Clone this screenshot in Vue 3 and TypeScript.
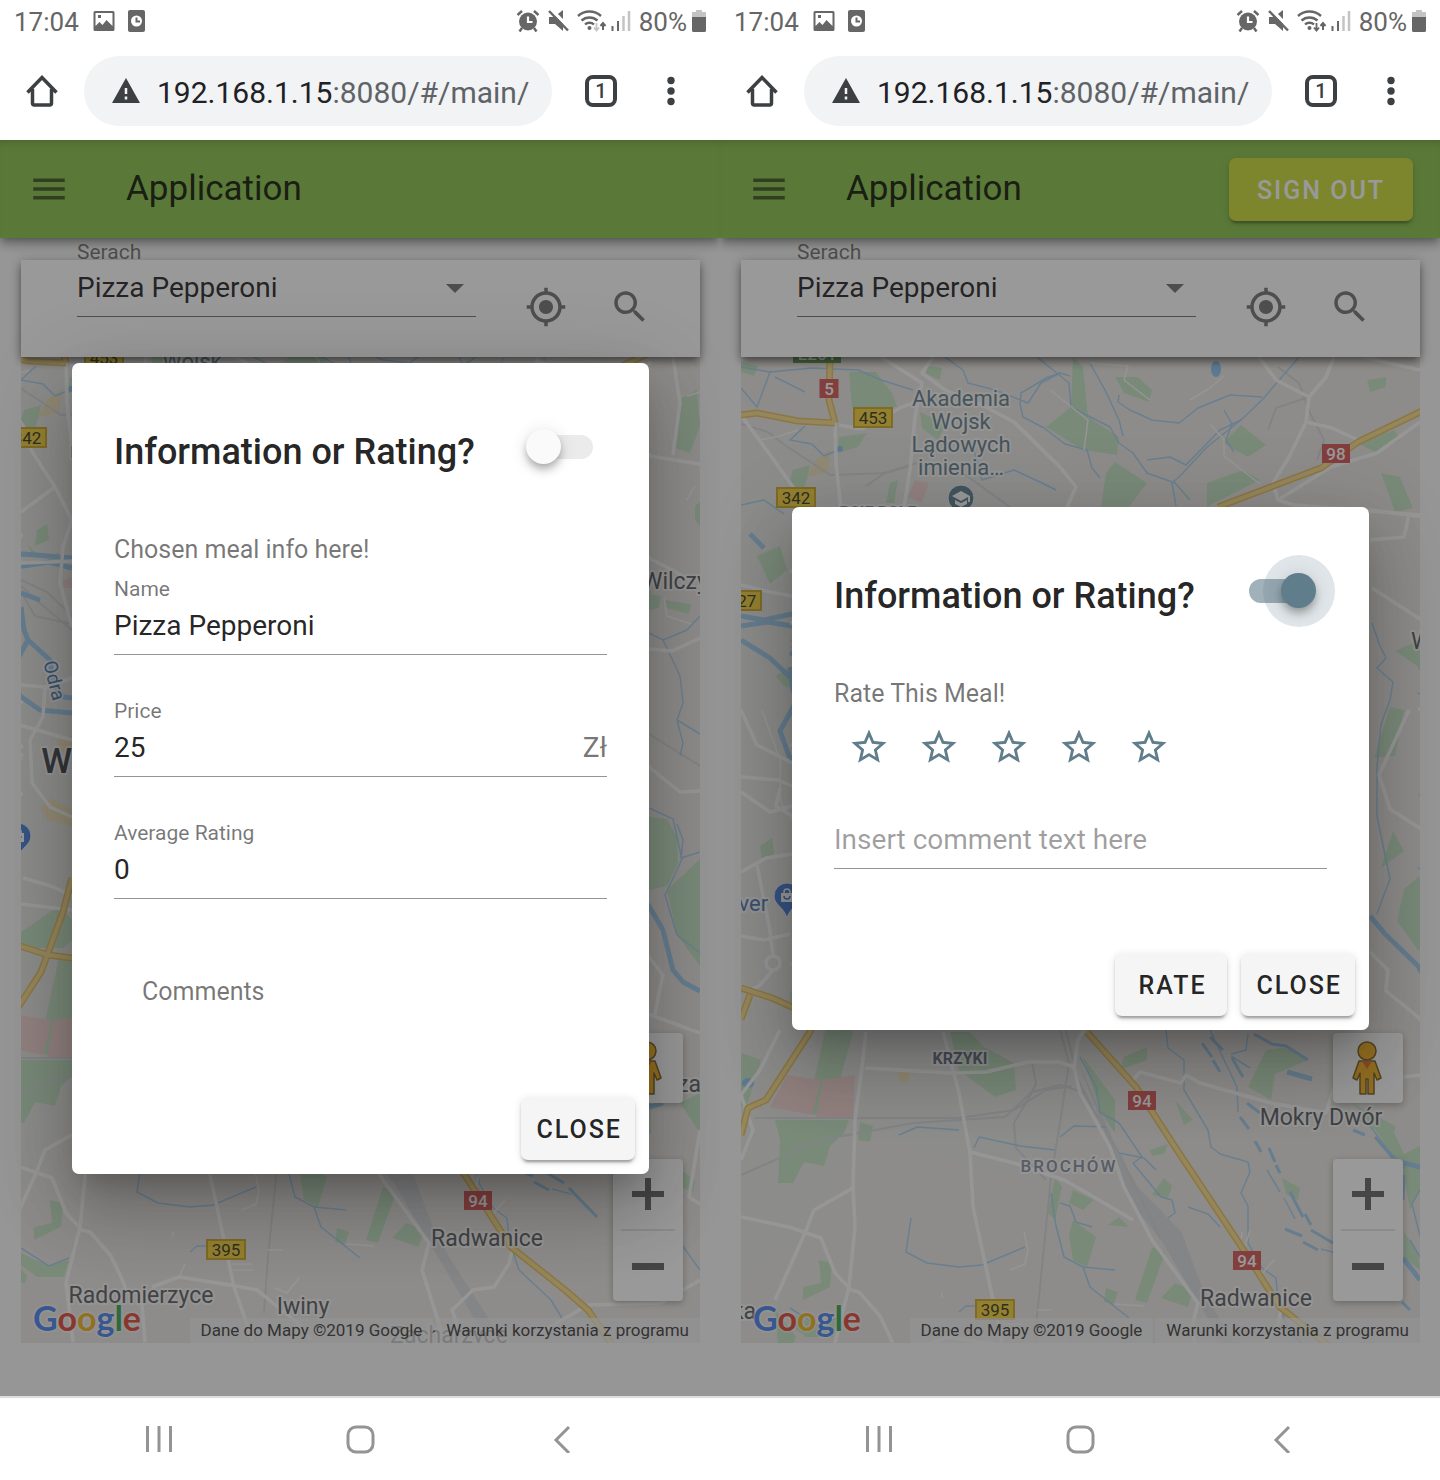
<script setup lang="ts">
import { ref } from 'vue'

interface Field {
  id: string
  label: string
  value: string
  suffix?: string
}

interface Phone {
  id: string
  signOut: boolean
  rating: boolean
  downlink: string
  viewBox: string
}

interface Shield {
  x: number
  y: number
  text: string
  tone: 'yellow' | 'red' | 'green'
}

interface Label {
  x: number
  y: number
  text: string
  tone: string
}

// Both screens show the same map, panned to a different origin.
const phones = ref<Phone[]>([
  { id: 'info', signOut: false, rating: false, downlink: '#c4c4c4', viewBox: '70 417 679 986' },
  { id: 'rate', signOut: true, rating: true, downlink: '#666', viewBox: '21 357 679 986' },
])

const fields: Field[] = [
  { id: 'name', label: 'Name', value: 'Pizza Pepperoni' },
  { id: 'price', label: 'Price', value: '25', suffix: 'Zł' },
  { id: 'average', label: 'Average Rating', value: '0' },
]

const parks: string[] = [
  '129,372 156,372 172,393 177,407 132,407',
  '353,357 363,367 368,417 399,437 397,455 363,450 326,427 351,407',
  '395,377 418,377 432,390 429,402 404,393',
  '395,462 427,483 409,507 381,507 386,473',
  '521,425 546,445 528,457 503,443',
  '487,483 523,470 540,480 500,500 487,507',
  '661,473 680,477 693,508 675,512',
  '638,443 675,430 680,440 657,453',
  '647,380 666,377 666,387 650,392',
  '119,437 147,433 138,447 117,453',
  '170,483 178,480 174,503 166,503',
  '73,470 90,465 87,480 69,483',
  '21,362 38,366 34,376 21,372',
  '208,366 222,368 220,380 206,374',
  '200,412 226,424 218,440 202,428',
  '37,556 60,546 67,570 50,584',
  '70,480 88,472 84,490 70,496',
  '86,590 96,584 98,600 84,606',
  '76,604 88,616 82,616',
  '96,620 108,612 104,624',
  '56,676 68,668 72,690 62,684',
  '40,846 52,838 54,854 42,862',
  '21,1053 41,1060 28,1103 21,1107',
  '70,992 108,966 121,980 121,1000 112,1008 84,1008 70,1002',
  '108,1018 128,1018 133,1032 110,1117 87,1113',
  '55,1120 129,1120 124,1133 110,1146 104,1166 84,1162 73,1183 58,1183 60,1140',
  '140,1122 153,1126 150,1142 138,1140',
  '230,1032 250,1032 264,1047 294,1063 296,1090 275,1097 239,1070',
  '363,1057 395,1100 395,1133 381,1113',
  '404,1057 427,1047 427,1060 400,1070',
  '546,1050 569,1047 588,1060 555,1074 551,1100 528,1087',
  '455,1100 473,1120 464,1125',
  '335,1177 342,1187 335,1220 328,1213',
  '353,1190 374,1200 363,1210 349,1203',
  '353,1220 376,1237 367,1267 353,1260 349,1235',
  '399,1217 409,1227 388,1225',
  '430,1150 448,1144 444,1154 432,1156',
  '432,1195 444,1178 452,1186 448,1198',
  '432,1247 445,1253 427,1303 415,1300',
  '455,1283 473,1290 468,1307 441,1298',
  '386,1288 398,1292 394,1304 384,1302',
  '99,1260 112,1263 110,1287 83,1300 83,1287 101,1283',
  '70,1313 98,1326 118,1320 113,1337 86,1337 70,1325',
  '55,1310 76,1336 74,1343 58,1343',
  '562,1178 580,1188 578,1200 566,1194',
  '634,1104 660,1118 676,1126 674,1132 684,1154 700,1146 700,1190 690,1210 684,1176 660,1136',
  '684,1232 698,1252 700,1270 684,1258',
  '729,459 746,450 749,486 739,513 724,508',
  '744,566 749,562 749,586 744,580',
  '698,654 710,656 708,668 698,670',
  '714,660 740,664 738,674 716,668',
  '654,758 670,707 684,710 675,756',
  '661,868 673,831 684,851',
  '675,651 700,640 700,668',
  '677,921 684,889 698,877 716,879 726,897 727,923 716,946 698,950',
  '716,950 749,919 749,1026 726,995',
  '749,1153 729,1163 749,1193',
  '730,1230 744,1240 742,1252 728,1246',
]

const pinkAreas: string[] = [
  '67,1075 101,1080 92,1115 50,1107',
  '103,1080 135,1075 133,1117 96,1117',
  '195,480 209,483 202,503 188,497',
  '112,640 121,638 121,648 113,648',
]

const sandAreas: string[] = [
  '96,460 110,450 108,473 87,477',
  '177,1072 190,1072 188,1082 180,1082',
  '90,868 100,858 121,870 121,886 96,880',
  '106,800 121,796 121,810 110,812',
]

const streams: string[] = [
  '21,367 50,372 92,368 138,370 161,380 193,390',
  '50,372 37,407 21,388',
  '55,377 85,392',
  '85,426 70,440 92,444 104,456 118,450',
  '225,357 243,370 248,383 275,390 308,403 321,383 340,373 350,376',
  '317,357 349,383 351,407 390,427 399,443 413,453 427,473 455,483 470,500',
  '340,373 328,377 301,393 300,404 303,417 324,428 345,444 367,450 372,468 380,478',
  '399,395 398,402 410,410 432,420 459,423 478,408 510,395 542,397',
  '579,357 542,400 521,420 487,447 460,476 452,483 456,506',
  '427,460 450,457 466,465 500,430 521,420',
  '370,363 386,392 399,420 403,436',
  '504,410 512,424 506,440 514,452',
  '254,450 262,480 294,470 320,482 336,490',
  '21,505 44,500 64,514',
  '652,623 660,646 666,658 657,668 673,682 670,700 661,724 657,767 657,816 670,879 662,900 657,914',
  '179,1135 197,1127 239,1130',
  '254,1148 259,1137 300,1146 335,1150',
  '191,1218 186,1252 207,1263 239,1267 262,1265 305,1247',
  '340,1137 354,1126 386,1127',
  '331,1193 336,1226 344,1257 363,1267 370,1287 394,1306 409,1318',
  '340,1203 350,1206 356,1222 372,1227',
  '363,1267 395,1270',
  '239,1312 246,1306 262,1306',
  '360,1057 376,1087 380,1112 399,1123 422,1157 413,1163 441,1197 452,1200 455,1213 448,1218',
  '399,1153 424,1158 436,1170',
  '446,1030 448,1048 464,1060 464,1090 488,1130 491,1147 500,1154 528,1162 530,1172 521,1193 528,1206 528,1243 542,1268 556,1278 558,1300 568,1330 600,1360 612,1380',
  '468,1207 488,1214 500,1227',
  '490,1030 506,1064 517,1087 518,1112',
  '511,1054 526,1050 528,1034',
  '511,1056 530,1068',
  '632,1116 650,1126 668,1150 684,1168',
  '700,1190 692,1204 700,1236',
  '70,1308 98,1326 118,1318',
  '698,693 712,700 729,736 732,763 726,780 732,803 729,816',
  '726,780 749,794',
  '712,700 736,690 749,676',
  '698,868 722,879 731,919 714,955 726,995 749,1013',
  '726,884 732,900 730,918 749,912',
  '690,1240 720,1290 749,1330',
]

const rivers: string[] = [
  '21,626 48,622 72,626 98,622 121,628',
  '21,616 44,620 72,614 121,618',
  '21,640 50,658 72,679',
  '70,653 89,660',
  '70,667 73,690 77,700 99,720 102,743 112,757 121,758',
  '77,700 60,731 69,756 89,770 121,773',
  '650,916 666,935 698,966 712,990 722,1030 732,1042 749,1051',
  '680,1162 700,1167 712,1163',
  '683,1258 700,1280',
  '567,1072 592,1079',
  '30,534 44,548',
]

const ditches: string[] = [
  '482,1043 492,1057',
  '493,1060 500,1072',
  '490,1037 503,1050',
  '512,1058 523,1077',
  '534,1034 552,1044 566,1046 588,1060',
  '527,1103 540,1113',
  '520,1117 529,1129',
  '535,1141 541,1152',
  '549,1148 555,1162',
  '556,1165 560,1173',
  '570,1192 583,1217',
  '585,1214 591,1225',
  '565,1229 582,1236',
  '583,1242 598,1250',
  '591,1230 613,1243',
  '618,1248 646,1277',
  '633,1130 645,1135',
  '655,1137 673,1158',
  '684,1175 683,1200',
  '682,1302 690,1310',
]

const thinDitches: string[] = [
  '547,1170 560,1192',
  '564,1198 575,1219',
  '601,1249 620,1254',
]

const railways: string[] = [
  '21,424 48,432 66,446 83,457 110,475 165,473 197,463',
  '146,486 165,473 190,466',
  '243,473 294,510',
  '558,367 579,383 590,413 604,440 597,460',
  '589,397 556,408 548,430',
  '21,1175 101,1140 193,1123 285,1117 312,1092 340,1085 363,1092 399,1153 441,1240',
  '34,1118 239,1118 294,1110 326,1090 352,1086',
  '312,1062 316,1084 310,1096 294,1123 296,1148 326,1180',
  '340,1030 349,1063 340,1123 331,1177 317,1317 313,1373',
  '346,1030 358,1080 372,1106',
  '70,640 96,652 121,676',
  '70,646 90,664 121,690',
  '70,652 84,676 121,684',
  '698,794 749,826',
]

const minorRoads: string[] = [
  '370,363 408,366 404,380 430,400',
  '330,390 368,420 364,450',
  '470,400 490,388 504,376',
  '490,424 504,440 504,456 540,484',
  '40,440 60,436 78,430',
  '291,1270 305,1264 308,1250 304,1232',
  '222,1292 222,1298',
  '317,1310 332,1310',
  '281,1324 302,1324',
  '281,1330 302,1330',
  '228,1337 234,1324',
  '395,1304 424,1306',
  '540,1276 554,1260',
  '524,1250 530,1230',
  '520,1246 522,1232',
  '324,1348 336,1353 348,1338',
  '736,456 749,452',
  '736,560 744,546',
  '713,658 716,676 740,684',
  '42,710 60,760 60,800 72,820',
]

const roads: string[] = [
  '119,425 142,429',
  '115,423 116,463 120,500 121,520',
  '23,418 48,452 73,487 80,510 104,547 121,580 112,607 109,643 121,687',
  '70,572 104,547',
  '161,357 202,383 195,417 190,470 184,507',
  '213,357 202,373 225,390 262,405 294,422 340,467 356,487 347,507',
  '142,429 180,408 200,400',
  '539,357 556,380 589,397 606,377 614,357',
  '589,397 586,422 569,457 553,483 558,500 574,505 700,515',
  '586,422 612,428 638,440',
  '700,422 657,453 611,467 558,500',
  '643,357 700,370',
  '689,515 684,537 650,540',
  '21,585 50,592 72,596',
  '70,623 100,622 121,621',
  '70,745 96,747 121,738',
  '94,747 92,777 79,800 81,843 99,867 121,877',
  '21,710 37,745 72,763',
  '21,777 58,780 72,786 121,800',
  '60,788 56,806 72,816',
  '21,792 50,812 72,806',
  '21,872 46,858 72,854',
  '37,865 50,931 53,956',
  '53,970 40,985 30,991',
  '21,936 44,940 70,934',
  '72,938 100,946 121,956',
  '70,964 121,970',
  '60,1030 40,1070 21,1095 33,1130 21,1160',
  '146,1032 142,1067 135,1120 133,1187 135,1227 129,1287 115,1343 122,1402',
  '133,1188 94,1210 85,1233 55,1300',
  '21,1217 69,1227 101,1238 115,1273 131,1290 139,1292 160,1316 170,1337 176,1352 190,1352 194,1402',
  '201,1347 228,1337 279,1345 306,1350 343,1380 360,1400',
  '223,1032 239,1093 250,1153 253,1207 273,1300 283,1347 302,1402',
  '145,1068 230,1073 266,1072 308,1062 340,1062 354,1067 360,1093 390,1147 404,1187 432,1240 478,1303 471,1330 490,1390',
  '354,1067 358,1040 364,1030',
  '250,1152 294,1163 344,1180 367,1193 413,1220',
  '411,1082 420,1072 461,1083 466,1075 480,1083 551,1103 606,1113 613,1090 640,1082 700,1075 749,1093',
  '561,1310 558,1324 543,1347 522,1350 501,1370 508,1390',
  '749,1340 710,1363 637,1365 590,1392',
  '722,417 729,463 722,515',
  '650,510 698,516 749,524',
  '652,588 700,619 740,640',
  '698,709 721,711 749,698',
  '689,710 659,775 670,809 698,827 729,852 749,851',
  '650,952 668,970 666,991 698,1017 712,1035 708,1053 704,1075',
  '749,1190 738,1257 749,1264',
  '310,1000 312,1020',
]

const highways: string[] = [
  '21,415 37,413 78,421 115,423',
  '110,357 109,400 115,423',
  '498,507 556,485 601,468 638,442 700,412 749,390',
  '21,988 52,998 72,1007 97,1015 121,1018',
  '30,995 21,1019',
  '121,938 112,972 97,1013 90,1032 46,1100 28,1108 21,1135',
  '367,1032 416,1087 459,1153 519,1243 560,1307 614,1350 637,1370 660,1403',
]

const shields: Shield[] = [
  { x: 97, y: 354, text: 'E261', tone: 'green' },
  { x: 109, y: 389, text: '5', tone: 'red' },
  { x: 153, y: 418, text: '453', tone: 'yellow' },
  { x: 76, y: 498, text: '342', tone: 'yellow' },
  { x: 616, y: 454, text: '98', tone: 'red' },
  { x: 22, y: 601, text: '327', tone: 'yellow' },
  { x: 422, y: 1101, text: '94', tone: 'red' },
  { x: 527, y: 1261, text: '94', tone: 'red' },
  { x: 275, y: 1310, text: '395', tone: 'yellow' },
]

const labels: Label[] = [
  { x: 241, y: 406, text: 'Akademia', tone: 'place school' },
  { x: 241, y: 429, text: 'Wojsk', tone: 'place school' },
  { x: 241, y: 452, text: 'Lądowych', tone: 'place school' },
  { x: 241, y: 475, text: 'imienia…', tone: 'place school' },
  { x: 240, y: 1064, text: 'KRZYKI', tone: 'district' },
  { x: 349, y: 1172, text: 'BROCHÓW', tone: 'district wide' },
  { x: 158, y: 518, text: 'PSIE POLE', tone: 'district muted' },
  { x: 601, y: 1125, text: 'Mokry Dwór', tone: 'town' },
  { x: 536, y: 1306, text: 'Radwanice', tone: 'town' },
  { x: 190, y: 1363, text: 'Radomierzyce', tone: 'town' },
  { x: 352, y: 1374, text: 'Iwiny', tone: 'town' },
  { x: 498, y: 1403, text: 'Zacharzyce', tone: 'town' },
  { x: 736, y: 649, text: 'Wilczyce', tone: 'town' },
  { x: 738, y: 1152, text: 'za', tone: 'town' },
  { x: 24, y: 1319, text: 'ka', tone: 'town' },
  { x: 158, y: 833, text: 'Wrocław', tone: 'city' },
  { x: 20, y: 911, text: 'Dover', tone: 'place shop' },
]

function shieldWidth(s: Shield): number {
  return s.text.length * 10 + (s.text.length > 1 ? 8 : 9)
}
</script>

<template>
  <main class="stage">
    <section v-for="p in phones" :key="p.id" class="phone">
      <header class="status">
        <span class="status-text">17:04</span>
        <svg class="picture" width="22" height="22" viewBox="0 0 22 22">
          <path fill="#666" fill-rule="evenodd" d="M2 1h18a1.500 1.500 0 0 1 1.500 1.500v17A1.500 1.500 0 0 1 20 21H2a1.500 1.500 0 0 1-1.500-1.500v-17A1.500 1.500 0 0 1 2 1zM2.500 3v13l4-4 3 3 4-5 6 6V3zM5 5h3v3H5z" />
        </svg>
        <svg class="note" width="18" height="22" viewBox="0 0 18 22">
          <rect x="0" y="0" width="17" height="22" rx="2" fill="#666" />
          <circle cx="8.500" cy="11" r="5.500" fill="#fff" />
          <path d="M8.500 7.500V11.500H12" fill="none" stroke="#666" stroke-width="2" />
        </svg>
        <span class="spacer"></span>
        <svg width="24" height="24" viewBox="0 0 24 24">
          <circle cx="12" cy="12.500" r="9" fill="#666" />
          <path d="M12 7.500v5.500h4.500" fill="none" stroke="#fff" stroke-width="2.200" />
          <path d="M1.500 6 6 2M22.500 6 18 2M6 19l-2.500 3.500M18 19l2.500 3.500" stroke="#666" stroke-width="2.500" />
        </svg>
        <svg class="mute" width="24" height="24" viewBox="0 0 24 24">
          <path d="M2 8h5l9-7v21l-8-7H2z" fill="#666" />
          <path d="M3.500 0 24 20.500" stroke="#fff" stroke-width="3.500" />
          <path d="M2 2 21 21.500" stroke="#666" stroke-width="2.500" />
        </svg>
        <svg class="wifi" width="30" height="24" viewBox="0 0 30 24">
          <g fill="none" stroke="#666" stroke-width="2.400">
            <path d="M1 7a17 17 0 0 1 23 0" />
            <path d="M4.500 11.500a12 12 0 0 1 16 0" />
            <path d="M8 15.500a6.500 6.500 0 0 1 9 0" />
          </g>
          <circle cx="12.500" cy="19" r="2" fill="#666" />
          <path d="M19.500 14v7M17 18.500 19.500 21.500l2.500-3" fill="none" :stroke="p.downlink" stroke-width="1.800" />
          <path d="M26 21v-7M23.500 17 26 14l2.500 3" fill="none" stroke="#666" stroke-width="2" />
        </svg>
        <svg class="signal" width="20" height="22" viewBox="0 0 20 22">
          <path d="M1.500 16v5M7 11v10" stroke="#666" stroke-width="2" />
          <path d="M12.500 6v15M18 1v20" stroke="#c4c4c4" stroke-width="2.500" />
        </svg>
        <span class="status-text">80%</span>
        <svg class="battery" width="14" height="22" viewBox="0 0 14 22">
          <path d="M4 0h6v2h4v6H0V2h4z" fill="#c4c4c4" />
          <path d="M0 7h14v13.500a1.500 1.500 0 0 1-1.500 1.500h-11A1.500 1.500 0 0 1 0 20.500z" fill="#666" />
        </svg>
      </header>

      <nav class="chrome" aria-label="Browser">
        <button class="chrome-btn home" aria-label="Home">
          <svg width="34" height="34" viewBox="0 0 34 34">
            <path d="M2.500 18.500 17 3.500l14.500 15M7.500 15v14.500a1.500 1.500 0 0 0 1.500 1.500h16a1.500 1.500 0 0 0 1.500-1.500V15" fill="none" stroke="#3c4043" stroke-width="3.500" />
          </svg>
        </button>
        <button class="omnibox" aria-label="Edit address">
          <svg width="28" height="28" viewBox="0 0 28 28">
            <path d="M14 1 28 26H0z" fill="#3c4043" />
            <path d="M14 11v6M14 19.500v3" stroke="#f1f3f4" stroke-width="2.500" />
          </svg>
          <span class="url">192.168.1.15<span class="path">:8080/#/main/</span></span>
        </button>
        <button class="chrome-btn tabs" aria-label="Open tabs"><span class="tab-count">1</span></button>
        <button class="chrome-btn kebab" aria-label="More">
          <svg width="8" height="30" viewBox="0 0 8 30">
            <g fill="#3c4043">
              <circle cx="4" cy="4.500" r="3.700" />
              <circle cx="4" cy="15" r="3.700" />
              <circle cx="4" cy="25.500" r="3.700" />
            </g>
          </svg>
        </button>
      </nav>

      <div class="viewport">
        <header class="toolbar">
          <button class="menu" aria-label="Menu">
            <svg width="42" height="42" viewBox="0 0 24 24"><path d="M3 18h18v-2H3v2zm0-5h18v-2H3v2zm0-7v2h18V6H3z" fill="rgba(0,0,0,.54)" /></svg>
          </button>
          <h1>Application</h1>
          <span class="spacer"></span>
          <button v-if="p.signOut" class="btn sign-out">SIGN OUT</button>
        </header>

        <div class="content">
          <div class="search-card">
            <div class="search-field">
              <label :for="'meal-' + p.id">Serach</label>
              <div class="select-wrap">
                <select :id="'meal-' + p.id">
                  <option>Pizza Pepperoni</option>
                </select>
                <svg class="caret" width="18" height="9" viewBox="0 0 18 9"><path d="M0 0h18L9 9z" fill="rgba(0,0,0,.54)" /></svg>
              </div>
            </div>
            <button class="icon-btn" aria-label="Locate me">
              <svg width="42" height="42" viewBox="0 0 24 24"><path fill="rgba(0,0,0,.54)" d="M12 8c-2.210 0-4 1.790-4 4s1.790 4 4 4 4-1.790 4-4-1.790-4-4-4zm8.940 3c-.46-4.170-3.770-7.480-7.940-7.940V1h-2v2.060C6.830 3.520 3.520 6.830 3.060 11H1v2h2.060c.46 4.170 3.770 7.480 7.940 7.940V23h2v-2.060c4.170-.46 7.480-3.770 7.940-7.940H23v-2h-2.060zM12 19c-3.870 0-7-3.130-7-7s3.130-7 7-7 7 3.130 7 7-3.130 7-7 7z" /></svg>
            </button>
            <button class="icon-btn" aria-label="Search">
              <svg width="42" height="42" viewBox="0 0 24 24"><path fill="rgba(0,0,0,.54)" d="M15.500 14h-.79l-.28-.27C15.410 12.590 16 11.110 16 9.500 16 5.910 13.090 3 9.500 3S3 5.910 3 9.500 5.910 16 9.500 16c1.610 0 3.090-.59 4.230-1.570l.27.28v.79l5 4.990L20.490 19l-4.990-5zm-6 0C7.010 14 5 11.990 5 9.500S7.010 5 9.500 5 14 7.010 14 9.500 11.990 14 9.500 14z" /></svg>
            </button>
          </div>

          <div class="map">
            <svg class="map-canvas" :viewBox="p.viewBox" preserveAspectRatio="xMidYMin slice">
              <rect x="0" y="300" width="800" height="1200" fill="#ebe8e3" />
              <polygon class="urban" points="0,440 130,420 330,470 400,600 420,900 380,1100 300,1180 140,1130 90,1230 0,1300" />
              <polygon v-for="(d, i) in parks" :key="'g' + i" class="park" :points="d" />
              <polygon v-for="(d, i) in pinkAreas" :key="'p' + i" class="pink" :points="d" />
              <polygon v-for="(d, i) in sandAreas" :key="'s' + i" class="sand" :points="d" />
              <polygon class="yard" points="358,1062 372,1092 399,1153 418,1187 446,1216 462,1232 468,1250 482,1287 500,1320 545,1390 530,1390 487,1317 441,1240 409,1200 384,1130" />
              <polyline v-for="(d, i) in railways" :key="'r' + i" class="rail" :points="d" />
              <polyline v-for="(d, i) in streams" :key="'w' + i" class="stream" :points="d" />
              <polyline v-for="(d, i) in rivers" :key="'v' + i" class="river" :points="d" />
              <polyline v-for="(d, i) in ditches" :key="'d' + i" class="ditch" :points="d" />
              <polyline v-for="(d, i) in thinDitches" :key="'t' + i" class="stream" :points="d" />
              <ellipse cx="496" cy="369" rx="5" ry="8" class="lake" />
              <ellipse cx="120" cy="449" rx="3" ry="3" class="lake" />
              <ellipse cx="28" cy="1083" rx="6" ry="5" class="lake" />
              <polyline v-for="(d, i) in minorRoads" :key="'m' + i" class="minor" :points="d" />
              <polyline v-for="(d, i) in roads" :key="'o' + i" class="road" :points="d" />
              <circle cx="53" cy="963" r="7" class="road" />
              <polyline v-for="(d, i) in highways" :key="'hc' + i" class="highway-case" :points="d" />
              <polyline v-for="(d, i) in highways" :key="'h' + i" class="highway" :points="d" />

              <g v-for="(s, i) in shields" :key="'sh' + i" :class="['shield', s.tone]">
                <rect :x="s.x - shieldWidth(s) / 2" :y="s.y - 10" :width="shieldWidth(s)" height="19" />
                <text :x="s.x" :y="s.y + 6">{{ s.text }}</text>
              </g>

              <text v-for="(l, i) in labels" :key="'l' + i" :class="['label', l.tone]" :x="l.x" :y="l.y">{{ l.text }}</text>
              <text class="label water-name" transform="translate(97 742) rotate(76)">Odra</text>

              <circle cx="241" cy="498" r="13" fill="#5f8295" stroke="#f4f4f4" stroke-width="1" />
              <path d="M241 491l-9 5 9 5 7-4v5h2v-6zM235 500v4l6 3 6-3v-4l-6 3z" fill="#fff" />
              <path d="M67 883a13 13 0 0 1 13 13c0 9-10 11-13 22-3-11-13-13-13-22a13 13 0 0 1 13-13z" fill="#4a80d8" stroke="#e8f0fb" stroke-width="1" />
              <path d="M61 893h12v9H61z" fill="#fff" />
              <path d="M64 893v-1a3 3 0 0 1 6 0v1" fill="none" stroke="#fff" stroke-width="1.500" />
              <path d="M64 896a3 3 0 0 0 6 0" fill="none" stroke="#4a80d8" stroke-width="1.500" />
            </svg>

            <div class="map-controls">
              <button class="pegman" aria-label="Street View">
                <svg width="32" height="54" viewBox="0 0 32 54">
                  <g fill="#f5b220" stroke="#7d6428" stroke-width="1.500" stroke-linejoin="round">
                    <path d="M8 20h16l6 17-4 2-3-7v21h-6V38h-2v15H9V32l-3 7-4-2z" />
                    <circle cx="16" cy="10" r="9" />
                  </g>
                  <path d="M11 20h10l-5 8z" fill="#e0702a" />
                </svg>
              </button>
              <div class="zoom">
                <button aria-label="Zoom in">
                  <svg width="32" height="32" viewBox="0 0 32 32"><path d="M13 0h6v13h13v6H19v13h-6V19H0v-6h13z" fill="#666" /></svg>
                </button>
                <span class="zoom-rule"></span>
                <button aria-label="Zoom out">
                  <svg width="32" height="32" viewBox="0 0 32 32"><path d="M0 13h32v7H0z" fill="#666" /></svg>
                </button>
              </div>
            </div>

            <a class="google" href="#" aria-label="Google"><span class="blue">G</span><span class="crimson">o</span><span class="gold">o</span><span class="blue">g</span><span class="leaf">l</span><span class="crimson">e</span></a>
            <div class="credits">
              <span>Dane do Mapy ©2019 Google</span>
              <a href="#">Warunki korzystania z programu</a>
            </div>
          </div>
        </div>

        <div class="overlay">
          <section class="dialog" role="dialog" :aria-labelledby="'title-' + p.id">
            <div class="title-row">
              <h2 :id="'title-' + p.id">Information or Rating?</h2>
              <input class="switch" type="checkbox" :checked="p.rating" :aria-labelledby="'title-' + p.id" />
            </div>

            <template v-if="!p.rating">
              <p class="subtitle">Chosen meal info here!</p>
              <div class="fields">
                <div v-for="f in fields" :key="f.id" class="field">
                  <label :for="f.id">{{ f.label }}</label>
                  <div class="field-line">
                    <input :id="f.id" type="text" :value="f.value" readonly />
                    <span v-if="f.suffix" class="suffix">{{ f.suffix }}</span>
                  </div>
                </div>
              </div>
              <p class="subtitle comments">Comments</p>
              <div class="actions">
                <button class="btn">CLOSE</button>
              </div>
            </template>

            <template v-else>
              <p class="subtitle">Rate This Meal!</p>
              <div class="stars">
                <button v-for="n in 5" :key="n" :aria-label="'Rate ' + n">
                  <svg width="42" height="42" viewBox="0 0 24 24"><path fill="#607d8b" d="M12 15.390l-3.760 2.270.99-4.280-3.320-2.880 4.380-.37L12 6.090l1.710 4.040 4.380.37-3.320 2.880.99 4.280M22 9.240l-7.190-.61L12 2 9.190 8.630 2 9.240l5.450 4.730L5.820 21 12 17.270 18.180 21l-1.640-7.030L22 9.240z" /></svg>
                </button>
              </div>
              <div class="field-line comment-line">
                <input type="text" placeholder="Insert comment text here" aria-label="Insert comment text here" />
              </div>
              <div class="actions">
                <button class="btn">RATE</button>
                <button class="btn">CLOSE</button>
              </div>
            </template>
          </section>
        </div>
      </div>

      <nav class="system-nav" aria-label="System">
        <button aria-label="Recent apps">
          <svg width="28" height="28" viewBox="0 0 28 28"><path d="M3.500 1v26M15 1v26M26.500 1v26" stroke="#949494" stroke-width="3" /></svg>
        </button>
        <button aria-label="Home screen">
          <svg width="30" height="30" viewBox="0 0 30 30"><rect x="3" y="3" width="25" height="25" rx="8" fill="none" stroke="#949494" stroke-width="3" /></svg>
        </button>
        <button aria-label="Back">
          <svg width="28" height="28" viewBox="0 0 28 28"><path d="M21 2 8 15l13 13" fill="none" stroke="#949494" stroke-width="3" /></svg>
        </button>
      </nav>
    </section>
  </main>
</template>

<style>
body {
  margin: 0;
  background: #fff;
}
</style>

<style scoped>
.stage {
  display: flex;
  min-height: 100vh;
  font-family: Roboto, "Liberation Sans", sans-serif;
  color: rgba(0, 0, 0, 0.87);
}

.phone {
  flex: 1;
  min-width: 0;
  display: flex;
  flex-direction: column;
}

button,
input,
select {
  font: inherit;
  color: inherit;
  margin: 0;
  padding: 0;
  border: 0;
  background: none;
  outline: 0;
}

button {
  display: flex;
  align-items: center;
  justify-content: center;
}

svg {
  display: block;
  flex: none;
}

h1,
h2,
p {
  margin: 0;
}

.spacer {
  flex: 1;
}

/* Android status bar */
.status {
  display: flex;
  align-items: center;
  height: 42px;
  padding: 0 14px;
}

.status-text {
  font-size: 26px;
  line-height: 42px;
  padding-top: 2px;
  color: #666;
}

.picture {
  margin-left: 14px;
}

.note {
  margin-left: 13px;
}

.mute {
  margin-left: 7px;
}

.wifi {
  margin-left: 6px;
}

.signal {
  margin: 0 8px 0 4px;
}

.battery {
  margin-left: 5px;
}

/* Browser bar */
.chrome {
  display: flex;
  align-items: center;
  height: 98px;
  padding-right: 28px;
}

.chrome-btn {
  height: 70px;
}

.home {
  width: 84px;
}

.tabs {
  width: 98px;
}

.kebab {
  width: 42px;
}

.tab-count {
  box-sizing: border-box;
  width: 32px;
  height: 32px;
  border: 4px solid #3c4043;
  border-radius: 8px;
  font-size: 20px;
  line-height: 25px;
  font-weight: 500;
  color: #3c4043;
}

.omnibox {
  flex: 1;
  min-width: 0;
  height: 70px;
  padding: 0 17px 0 28px;
  border-radius: 35px;
  background: #f1f3f4;
  justify-content: flex-start;
}

.url {
  flex: 1;
  min-width: 0;
  margin-left: 17px;
  overflow: hidden;
  white-space: nowrap;
  text-align: left;
  font-size: 30px;
  line-height: 40px;
  padding-top: 3px;
  color: #202124;
}

.path {
  color: #5f6368;
}

/* Application */
.viewport {
  position: relative;
  flex: 1;
  display: flex;
  flex-direction: column;
  overflow: hidden;
  background: #fafafa;
}

.toolbar {
  position: relative;
  z-index: 2;
  display: flex;
  align-items: center;
  height: 98px;
  padding: 0 27px 0 28px;
  background: #8bc34a;
  box-shadow: 0 3px 7px -2px rgba(0, 0, 0, 0.3), 0 7px 9px rgba(0, 0, 0, 0.2), 0 2px 18px rgba(0, 0, 0, 0.18), inset 0 8px 8px -6px rgba(0, 0, 0, 0.2);
}

.toolbar h1 {
  margin-left: 56px;
  font-size: 35px;
  line-height: 48px;
  font-weight: 400;
}

.btn {
  box-sizing: border-box;
  min-width: 112px;
  height: 63px;
  padding: 2px 13px 0 15px;
  border-radius: 7px;
  background: #f5f5f5;
  font-size: 25px;
  font-weight: 500;
  letter-spacing: 2px;
  box-shadow: 0 5px 2px -3px rgba(0, 0, 0, 0.2), 0 3px 3px rgba(0, 0, 0, 0.14), 0 2px 8px rgba(0, 0, 0, 0.12);
}

.sign-out {
  padding: 2px 28px 0;
  background: #cddc39;
  color: #fff;
}

.content {
  flex: 1;
  display: flex;
  flex-direction: column;
  padding: 22px 20px 53px 21px;
}

.search-card {
  position: relative;
  z-index: 1;
  display: flex;
  align-items: center;
  height: 94px;
  padding: 0 28px 3px 56px;
  background: #fff;
  box-shadow: 0 5px 8px -2px rgba(0, 0, 0, 0.35), 0 4px 8px rgba(0, 0, 0, 0.25), 0 2px 14px rgba(0, 0, 0, 0.2);
}

.search-field {
  flex: 1;
  align-self: flex-start;
  margin: -20px 28px 0 0;
  display: flex;
  flex-direction: column;
}

.search-field label {
  font-size: 21px;
  line-height: 24px;
  color: rgba(0, 0, 0, 0.54);
}

.select-wrap {
  display: flex;
  align-items: center;
  height: 48px;
  padding-bottom: 4px;
  border-bottom: 1px solid rgba(0, 0, 0, 0.54);
}

.select-wrap select {
  flex: 1;
  appearance: none;
  font-size: 28px;
  line-height: 34px;
}

.caret {
  margin-right: 12px;
}

.icon-btn {
  width: 84px;
  height: 84px;
}

/* Map */
.map {
  position: relative;
  z-index: 0;
  flex: 1;
  min-height: 900px;
  overflow: hidden;
}

.map-canvas {
  position: absolute;
  inset: 0;
  width: 100%;
  height: 100%;
}

.urban {
  fill: #e8e7e6;
}

.park {
  fill: #c4e3c4;
}

.pink {
  fill: #f0d3cf;
}

.sand {
  fill: #efe1ba;
}

.yard {
  fill: #d9dade;
}

.lake {
  fill: #8fc5f2;
}

.rail,
.stream,
.river,
.ditch,
.minor,
.road,
.highway,
.highway-case {
  fill: none;
  stroke-linejoin: round;
}

.rail {
  stroke: #d4d6d9;
  stroke-width: 2;
}

.stream {
  stroke: #a6cfee;
  stroke-width: 1.5;
}

.river {
  stroke: #a0cbec;
  stroke-width: 5;
}

.ditch {
  stroke: #a0cbec;
  stroke-width: 3;
}

.minor {
  stroke: #f8f7f5;
  stroke-width: 1.5;
}

.road {
  stroke: #fbfaf9;
  stroke-width: 3.5;
}

.highway-case {
  stroke: #e7bf62;
  stroke-width: 7;
}

.highway {
  stroke: #f7de8e;
  stroke-width: 4;
}

.shield text {
  font-size: 17px;
  font-weight: 500;
  text-anchor: middle;
}

.yellow rect {
  fill: #f5d33c;
  stroke: #cfa92c;
  stroke-width: 2;
}

.yellow text {
  fill: #3c3a26;
  font-weight: 400;
}

.red rect {
  fill: #d65757;
}

.red text,
.green text {
  fill: #fff;
}

.green rect {
  fill: #5b9a4a;
}

.label {
  paint-order: stroke;
  stroke: rgba(255, 255, 255, 0.6);
  stroke-width: 4px;
  stroke-linejoin: round;
  text-anchor: middle;
}

.town {
  font-size: 23px;
  fill: #5b5f66;
}

.city {
  font-size: 35px;
  font-weight: 500;
  fill: #44474d;
}

.district {
  font-size: 16px;
  font-weight: 700;
  fill: #6a7186;
}

.muted {
  fill: #868ea3;
}

.wide {
  font-size: 17px;
  font-weight: 500;
  letter-spacing: 2px;
  fill: #868ea3;
}

.place {
  font-size: 22px;
}

.school {
  fill: #66808f;
}

.shop {
  fill: #4f77b5;
}

.water-name {
  font-size: 19px;
  fill: #4f79ae;
}

.map-controls {
  position: absolute;
  right: 17px;
  bottom: 42px;
  display: flex;
  flex-direction: column;
  gap: 56px;
}

.pegman,
.zoom {
  width: 70px;
  border-radius: 4px;
  background: #fff;
  box-shadow: 0 2px 7px rgba(0, 0, 0, 0.3);
}

.pegman {
  height: 70px;
  padding-right: 2px;
}

.zoom {
  display: flex;
  flex-direction: column;
  align-items: center;
}

.zoom button {
  width: 70px;
  height: 70px;
}

.zoom-rule {
  width: 54px;
  height: 2px;
  background: #e6e6e6;
}

.google {
  position: absolute;
  left: 12px;
  bottom: 6px;
  font-family: Lato, sans-serif;
  font-size: 34px;
  line-height: 38px;
  font-weight: 700;
  text-decoration: none;
  text-shadow: 0 0 3px #fff, 0 0 3px #fff;
}

.blue {
  color: #4b86f0;
}

.crimson {
  color: #e04a3c;
}

.gold {
  color: #f0b41e;
}

.leaf {
  color: #3aa757;
}

.credits {
  position: absolute;
  right: 0;
  bottom: 0;
  display: flex;
  gap: 2px;
  font-size: 17px;
  line-height: 25px;
  color: #444;
}

.credits span,
.credits a {
  padding: 0 11px;
  background: rgba(245, 245, 245, 0.7);
  color: inherit;
  text-decoration: none;
  white-space: nowrap;
}

/* Dialog */
.overlay {
  position: absolute;
  inset: 0;
  z-index: 3;
  display: flex;
  align-items: center;
  justify-content: center;
  padding: 0 71px 0 72px;
  background: rgba(33, 33, 33, 0.46);
}

.dialog {
  box-sizing: border-box;
  width: 100%;
  max-width: 577px;
  padding: 52px 42px 14px;
  border-radius: 7px;
  background: #fff;
  box-shadow: 0 19px 26px -12px rgba(0, 0, 0, 0.2), 0 42px 67px 5px rgba(0, 0, 0, 0.14), 0 16px 81px 14px rgba(0, 0, 0, 0.12);
}

.title-row {
  display: flex;
  align-items: center;
  justify-content: space-between;
  height: 72px;
  padding-right: 14px;
}

.title-row h2 {
  padding-top: 2px;
  font-size: 36px;
  line-height: 56px;
  font-weight: 500;
  white-space: nowrap;
}

.switch {
  appearance: none;
  position: relative;
  width: 64px;
  height: 24px;
  margin-bottom: 8px;
  border-radius: 12px;
  background: #ebebeb;
}

.switch::before {
  content: "";
  position: absolute;
  left: -3px;
  top: -6px;
  z-index: 1;
  width: 35px;
  height: 35px;
  border-radius: 50%;
  background: #fafafa;
  box-shadow: 0 4px 7px -2px rgba(0, 0, 0, 0.2), 0 7px 9px rgba(0, 0, 0, 0.14), 0 2px 18px rgba(0, 0, 0, 0.12);
}

.switch:checked {
  background: #a0b1b9;
}

.switch:checked::before {
  left: 32px;
  background: #607d8b;
}

.switch:checked::after {
  content: "";
  position: absolute;
  left: 14px;
  top: -24px;
  width: 72px;
  height: 72px;
  border-radius: 50%;
  background: rgba(96, 125, 139, 0.2);
}

.subtitle {
  margin-top: 42px;
  font-size: 25px;
  line-height: 42px;
  color: rgba(0, 0, 0, 0.54);
}

.fields {
  display: flex;
  flex-direction: column;
  gap: 38px;
}

.field {
  display: flex;
  flex-direction: column;
}

.field label {
  font-size: 21px;
  line-height: 36px;
  color: rgba(0, 0, 0, 0.54);
}

.field-line {
  display: flex;
  height: 37px;
  padding-bottom: 10px;
  border-bottom: 1px solid rgba(0, 0, 0, 0.42);
  font-size: 28px;
  line-height: 37px;
}

.field-line input {
  flex: 1;
  min-width: 0;
}

.field-line input::placeholder {
  color: rgba(0, 0, 0, 0.38);
  opacity: 1;
}

.suffix {
  color: rgba(0, 0, 0, 0.54);
}

.comments {
  margin: 72px 0 0 28px;
}

.stars {
  display: flex;
  height: 64px;
}

.stars button {
  width: 70px;
}

.comment-line {
  margin: 42px 0 2px;
}

.actions {
  display: flex;
  justify-content: flex-end;
  gap: 14px;
  margin: 84px -28px 0 0;
}

/* Android navigation bar */
.system-nav {
  display: flex;
  box-sizing: border-box;
  height: 84px;
  padding: 0 8%;
  border-top: 2px solid #dedede;
}

.system-nav button {
  flex: 1;
}
</style>
